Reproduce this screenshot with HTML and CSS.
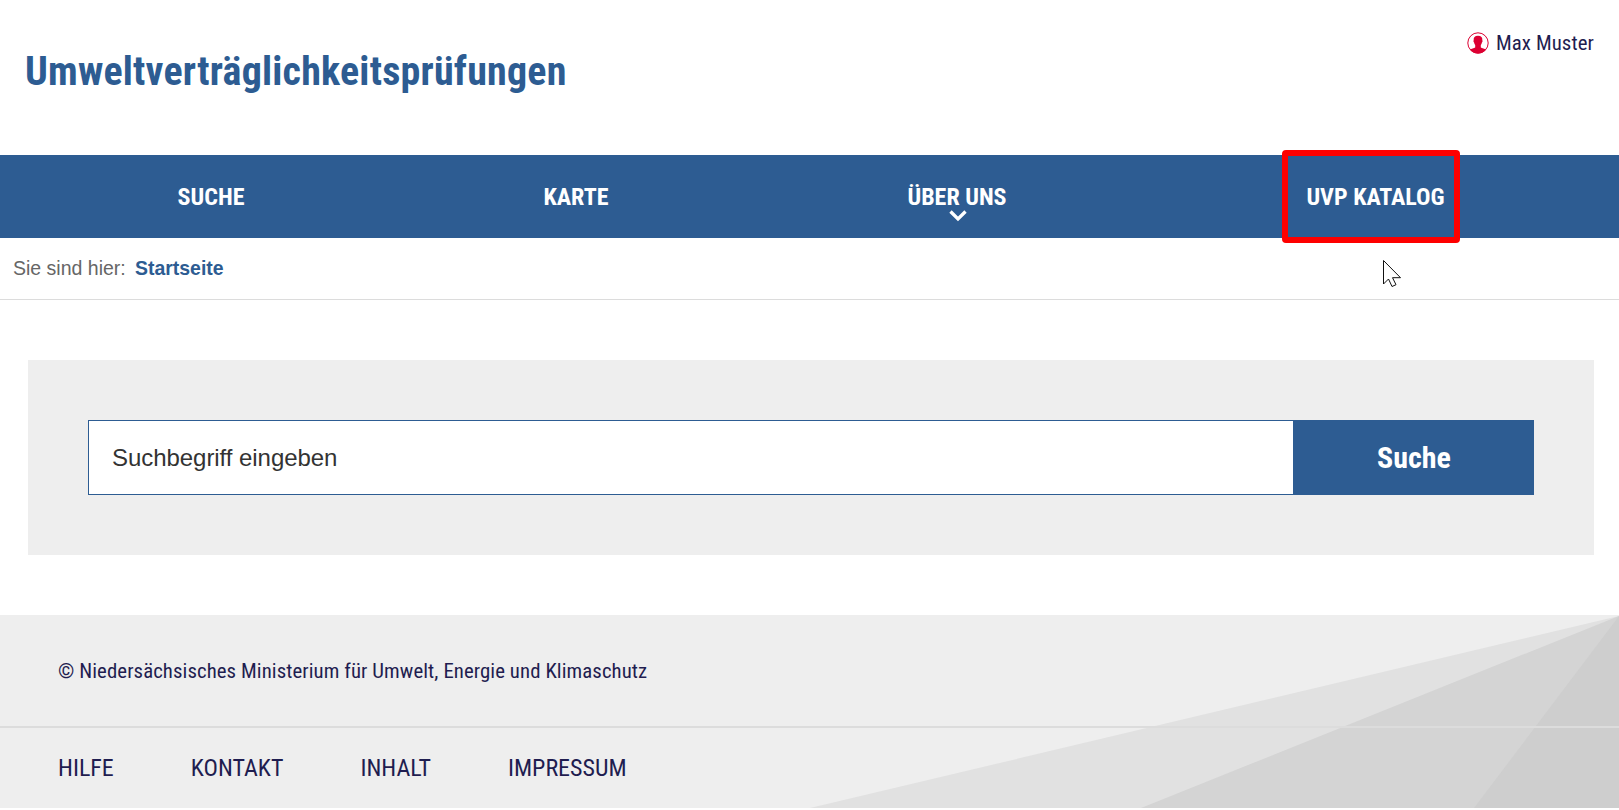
FILE: index.html
```html
<!DOCTYPE html>
<html lang="de">
<head>
<meta charset="utf-8">
<title>Umweltverträglichkeitsprüfungen</title>
<link rel="stylesheet" href="styles.css">
</head>
<body>
<header class="header">
  <h1 class="title"><span class="cond title-text">Umweltverträglichkeitsprüfungen</span></h1>
  <a class="user">
    <svg class="user-icon" viewBox="0 0 22 22"><circle cx="11" cy="11" r="10.2" fill="none" stroke="#dc0032" stroke-width="1"/><path fill="#dc0032" d="M11 3.800c-3.200 0-4.600 1.600-4.300 4.400-.5.300-.3 1.900.4 2.400.2 1.300.6 2 1.100 2.500v2.300c-1.200 1-3.900 1.100-5.300 2.300A10.400 10.400 0 0 0 11 21.400a10.400 10.400 0 0 0 8.100-3.700c-1.400-1.200-4.100-1.300-5.300-2.300v-2.300c.5-.5.9-1.200 1.100-2.500.7-.5.900-2.100.4-2.400.3-2.800-1.100-4.400-4.300-4.400z"/></svg>
    <span class="cond user-name">Max Muster</span>
  </a>
</header>
<nav class="nav">
  <a class="nav-item n1"><span class="cond">SUCHE</span></a>
  <a class="nav-item n2"><span class="cond">KARTE</span></a>
  <a class="nav-item n3"><span class="cond">ÜBER UNS</span><svg class="chevron" viewBox="0 0 18 12"><path d="M1.500 1.500 9 9l7.500-7.500" fill="none" stroke="#fff" stroke-width="3.300"/></svg></a>
  <a class="nav-item n4"><span class="cond">UVP KATALOG</span><i class="marker"></i></a>
</nav>
<div class="crumbs"><span class="crumb-label">Sie sind hier:</span><a class="crumb-current">Startseite</a></div>
<svg class="cursor" viewBox="0 0 20 28"><path d="M.5.500v23.500l5-5 3.500 7.500 4-1.800-3.500-7H17.500z" fill="#fff" stroke="#111" stroke-width="1"/></svg>
<main class="main">
  <form class="search">
    <div class="search-input">Suchbegriff eingeben</div>
    <div class="search-button"><span class="cond">Suche</span></div>
  </form>
</main>
<footer class="footer">
  <svg class="rays" viewBox="0 0 809 193" preserveAspectRatio="none"><path fill="#e1e1e1" d="M809 1 0 193h809z"/><path fill="#d4d4d4" d="M809 1 331 193h478z"/><path fill="#cecece" d="M809 1 664 193h145z"/></svg>
  <div class="copyright"><span class="cond copy-text">© Niedersächsisches Ministerium für Umwelt, Energie und Klimaschutz</span></div>
  <div class="links">
    <a class="link l1"><span class="cond">HILFE</span></a>
    <a class="link l2"><span class="cond">KONTAKT</span></a>
    <a class="link l3"><span class="cond">INHALT</span></a>
    <a class="link l4"><span class="cond">IMPRESSUM</span></a>
  </div>
</footer>
</body>
</html>
```
FILE: styles.css
```css
* { box-sizing: border-box; }
body { margin: 0; height: 810px; overflow: hidden; background: #fff; font-family: "Liberation Sans", Arial, sans-serif; color: #1f1d50; position: relative; }
.cond { font-family: "Roboto Condensed", Roboto, sans-serif; font-stretch: 75%; display: inline-block; white-space: nowrap; }
.header { height: 155px; padding: 0 25px; display: flex; justify-content: space-between; }
.title { margin: 48px 0 0; font-size: 40px; line-height: 47px; font-weight: 700; color: #2d5c92; letter-spacing: 0.21px; }
.user { display: flex; height: 26px; margin-top: 30px; gap: 7px; align-items: center; }
.user-icon { width: 22px; height: 22px; }
.user-name { font-size: 20.8px; line-height: 26px; letter-spacing: 0.1px; }
.nav { height: 83px; background: #2d5c92; display: grid; grid-template-columns: 422px 308px 454px 383px; }
.nav-item { color: #fff; font-size: 24px; font-weight: 700; line-height: 83px; text-align: center; position: relative; }
.chevron { position: absolute; width: 18px; height: 12px; left: 219px; top: 55px; }
.marker { position: absolute; left: 98px; top: -5px; width: 178px; height: 93px; border: 6px solid #fe0000; border-radius: 4px; }
.crumbs { height: 62px; border-bottom: 1px solid #dcdcdc; padding: 0 13px; display: flex; line-height: 60px; font-size: 20.8px; color: #666; white-space: nowrap; }
.crumb-label { width: 122px; transform: scaleX(0.938); transform-origin: left; }
.crumb-current { font-weight: 700; color: #2d5c92; transform: scaleX(0.935); transform-origin: left; }
.cursor { position: absolute; left: 1383px; top: 260px; width: 20px; height: 28px; }
.main { margin: 60px 25px 60px 28px; padding: 60px; height: 195px; background: #eee; }
.search { display: flex; height: 75px; }
.search-input { flex: 1; border: 1px solid #2d5c92; background: #fff; color: #333; font-size: 24px; line-height: 73px; padding-left: 23px; letter-spacing: -0.05px; }
.search-button { width: 240px; background: #2d5c92; color: #fff; font-size: 30px; font-weight: 700; line-height: 76px; text-align: center; }
.footer { height: 193px; background: #eee; position: relative; }
.rays { position: absolute; right: 0; top: 0; width: 809px; height: 193px; }
.copyright { position: relative; height: 113px; border-bottom: 2px solid #dcdcdc; padding-left: 58px; line-height: 111px; font-size: 20.8px; }
.copy-text { letter-spacing: 0.08px; }
.links { position: relative; display: flex; gap: 77px; padding-left: 58px; font-size: 24px; line-height: 80px; }
```
